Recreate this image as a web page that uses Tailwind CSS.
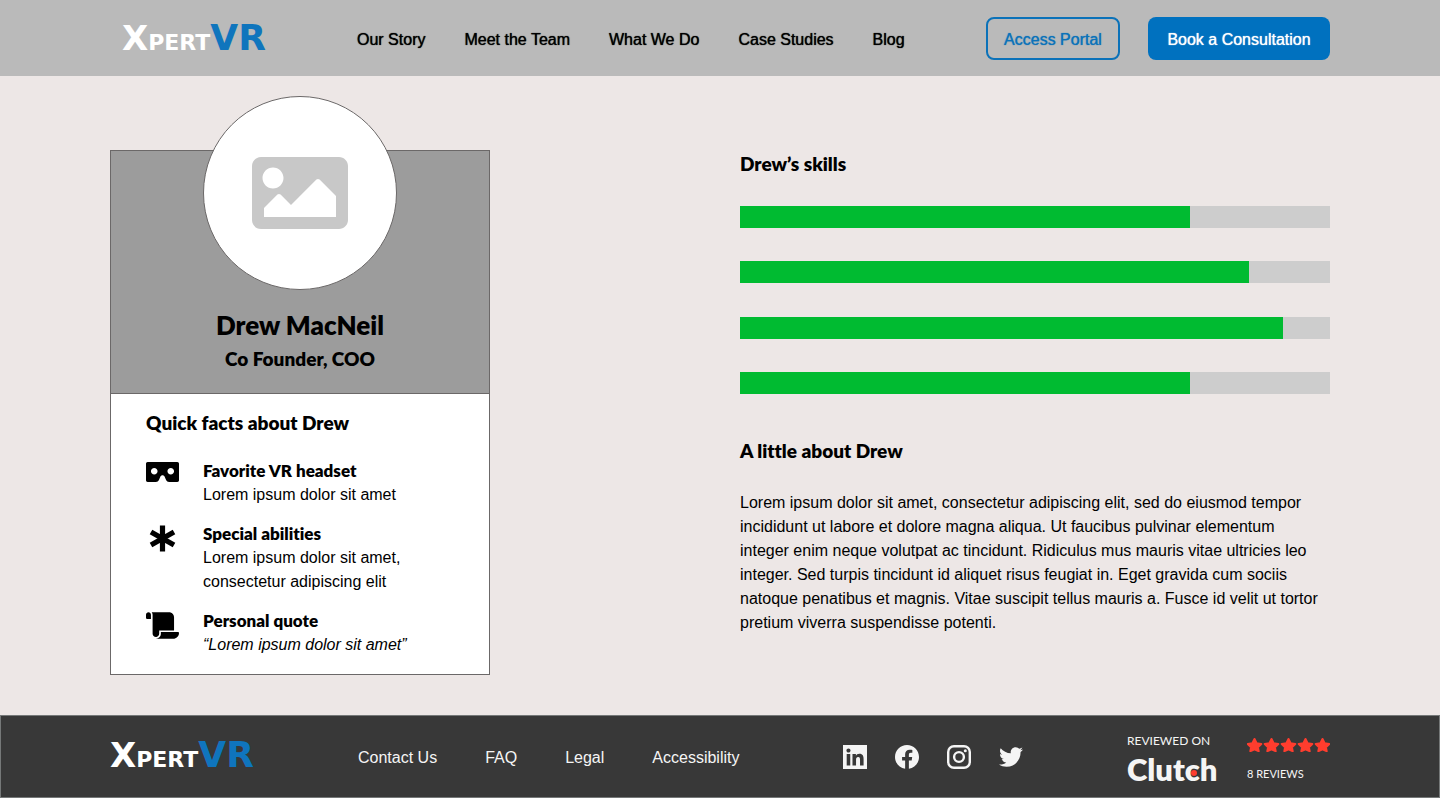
<!DOCTYPE html>
<html lang="en">
<head>
<meta charset="utf-8">
<meta name="viewport" content="width=device-width, initial-scale=1">
<title>Drew MacNeil – XpertVR</title>
<script src="https://cdn.jsdelivr.net/npm/@tailwindcss/browser@4"></script>
</head>
<body class="flex min-h-screen flex-col bg-[#ede7e6] font-['Liberation_Sans',Arial,sans-serif] text-base text-black [font-variant-ligatures:none]">

<header class="flex h-[76px] shrink-0 items-center bg-[#bababa] px-[110px]">
  <a href="#" aria-label="XpertVR home" class="flex w-[247px] shrink-0 items-baseline pt-1 pl-3 font-['DejaVu_Sans',sans-serif] leading-8 font-bold text-white"><span class="text-[34px]">X</span><span class="text-[22px]">PERT</span><span class="text-[36px] text-[#0f75bd]">VR</span></a>
  <nav aria-label="Main" class="flex gap-[39px] pt-1 whitespace-nowrap [text-shadow:0_0_1px_currentColor]">
    <a href="#">Our Story</a>
    <a href="#">Meet the Team</a>
    <a href="#">What We Do</a>
    <a href="#">Case Studies</a>
    <a href="#">Blog</a>
  </nav>
  <div class="ml-auto flex gap-7 whitespace-nowrap">
    <button type="button" class="h-[43px] w-[134px] rounded-lg border-2 border-[#0b72b9] pt-[3px] text-[#0b72b9] [text-shadow:0_0_1px_currentColor]">Access Portal</button>
    <button type="button" class="h-[43px] w-[182px] rounded-lg bg-[#0071bf] pt-[3px] text-white [text-shadow:0_0_1px_currentColor]">Book a Consultation</button>
  </div>
</header>

<main class="flex grow items-start justify-between gap-10 px-[110px] pt-[74px] pb-10">
  <article class="w-[380px] shrink-0 border border-[#6b6868] bg-white">
    <header class="flex h-[243px] flex-col items-center border-b border-[#6b6868] bg-[#9c9c9c] font-[Lato,sans-serif]">
      <div class="-mt-[55px] flex size-[194px] shrink-0 items-center justify-center rounded-full border border-[#6b6868] bg-white">
        <svg class="h-[72px] w-24 fill-[#c8c8c8]" viewBox="0 64 512 384" role="img" aria-label="Portrait placeholder"><path d="M464 448H48c-26.51 0-48-21.49-48-48V112c0-26.51 21.49-48 48-48h416c26.51 0 48 21.49 48 48v288c0 26.51-21.49 48-48 48zM112 120c-30.928 0-56 25.072-56 56s25.072 56 56 56 56-25.072 56-56-25.072-56-56-56zM64 384h384V272l-87.515-87.515c-4.686-4.686-12.284-4.686-16.971 0L208 320l-55.515-55.515c-4.686-4.686-12.284-4.686-16.971 0L64 336v48z"/></svg>
      </div>
      <h1 class="mt-[19px] text-[26px] leading-8 font-extrabold">Drew MacNeil</h1>
      <p class="mt-1 text-[19px] leading-7 font-extrabold">Co Founder, COO</p>
    </header>
    <div class="px-[35px] pt-[15px] pb-[17px]">
      <h2 class="font-[Lato,sans-serif] text-[19px] leading-7 font-extrabold">Quick facts about Drew</h2>
      <ul class="mt-[22px] flex flex-col gap-[15px]">
        <li class="flex">
          <svg class="mt-[3px] mr-6 h-5 w-[33px] shrink-0" viewBox="0 64 640 384" aria-hidden="true"><path d="M608 64H32C14.33 64 0 78.33 0 96v320c0 17.67 14.33 32 32 32h160.22c25.19 0 48.03-14.77 58.36-37.74l27.74-61.64C286.21 331.08 302.35 320 320 320s33.79 11.08 41.68 28.62l27.74 61.64C399.75 433.23 422.6 448 447.78 448H608c17.67 0 32-14.33 32-32V96c0-17.67-14.33-32-32-32zM160 304c-35.35 0-64-28.65-64-64s28.65-64 64-64 64 28.65 64 64-28.65 64-64 64zm320 0c-35.35 0-64-28.65-64-64s28.65-64 64-64 64 28.65 64 64-28.65 64-64 64z"/></svg>
          <div class="leading-6"><h3 class="font-[Lato,sans-serif] text-[17px] leading-6 font-extrabold">Favorite VR headset</h3><p>Lorem ipsum dolor sit amet</p></div>
        </li>
        <li class="flex">
          <svg class="mt-[3px] mr-6 h-[27px] w-[33px] shrink-0 stroke-black" viewBox="0 0 33 27" stroke-width="5.2" aria-hidden="true"><path d="M16.5 .5v26M5 7l23 13M5 20L28 7"/></svg>
          <div class="leading-6"><h3 class="font-[Lato,sans-serif] text-[17px] leading-6 font-extrabold">Special abilities</h3><p>Lorem ipsum dolor sit amet,<br>consectetur adipiscing elit</p></div>
        </li>
        <li class="flex">
          <svg class="mt-[3px] mr-6 h-[27px] w-[33px] shrink-0" viewBox="0 0 640 512" aria-hidden="true"><path d="M48 0C21.53 0 0 21.53 0 48v64c0 8.84 7.16 16 16 16h80V48C96 21.53 74.47 0 48 0zm208 412.57V352h288V96c0-52.94-43.06-96-96-96H111.59C121.74 13.41 128 29.92 128 48v368c0 38.87 34.65 69.65 74.75 63.12C234.22 474 256 444.46 256 412.57zM288 384v32c0 52.93-43.06 96-96 96h336c61.86 0 112-50.14 112-112 0-8.84-7.16-16-16-16H288z"/></svg>
          <div class="leading-6"><h3 class="font-[Lato,sans-serif] text-[17px] leading-6 font-extrabold">Personal quote</h3><p class="italic">“Lorem ipsum dolor sit amet”</p></div>
        </li>
      </ul>
    </div>
  </article>

  <div class="max-w-[590px] grow">
    <section>
      <h2 class="font-[Lato,sans-serif] text-[19px] leading-7 font-extrabold">Drew’s skills</h2>
      <div class="mt-7 flex h-[188px] flex-col justify-between">
        <div role="progressbar" aria-label="Skill 1" aria-valuenow="76" class="h-[22px] bg-[#cdcdcd]"><div class="h-full bg-[#00bb31]" style="width:76.3%"></div></div>
        <div role="progressbar" aria-label="Skill 2" aria-valuenow="86" class="h-[22px] bg-[#cdcdcd]"><div class="h-full bg-[#00bb31]" style="width:86.3%"></div></div>
        <div role="progressbar" aria-label="Skill 3" aria-valuenow="92" class="h-[22px] bg-[#cdcdcd]"><div class="h-full bg-[#00bb31]" style="width:92%"></div></div>
        <div role="progressbar" aria-label="Skill 4" aria-valuenow="76" class="h-[22px] bg-[#cdcdcd]"><div class="h-full bg-[#00bb31]" style="width:76.3%"></div></div>
      </div>
    </section>
    <section class="mt-[43px]">
      <h2 class="font-[Lato,sans-serif] text-[19px] leading-7 font-extrabold">A little about Drew</h2>
      <p class="mt-[26px] leading-6">Lorem ipsum dolor sit amet, consectetur adipiscing elit, sed do eiusmod tempor<br>incididunt ut labore et dolore magna aliqua. Ut faucibus pulvinar elementum<br>integer enim neque volutpat ac tincidunt. Ridiculus mus mauris vitae ultricies leo<br>integer. Sed turpis tincidunt id aliquet risus feugiat in. Eget gravida cum sociis<br>natoque penatibus et magnis. Vitae suscipit tellus mauris a. Fusce id velit ut tortor<br>pretium viverra suspendisse potenti.</p>
    </section>
  </div>
</main>

<footer class="flex h-[83px] shrink-0 items-center justify-between border border-[#757878] bg-[#383838] px-[109px] text-[#f5f5f5]">
  <div class="flex items-center pt-0.5">
    <a href="#" aria-label="XpertVR home" class="flex w-[248px] shrink-0 items-baseline font-['DejaVu_Sans',sans-serif] leading-8 font-bold text-white"><span class="text-[34px]">X</span><span class="text-[22px]">PERT</span><span class="text-[36px] text-[#0f75bd]">VR</span></a>
    <nav aria-label="Footer" class="flex gap-12 whitespace-nowrap">
      <a href="#">Contact Us</a>
      <a href="#">FAQ</a>
      <a href="#">Legal</a>
      <a href="#">Accessibility</a>
    </nav>
  </div>
  <div class="flex items-center gap-7">
    <a href="#" aria-label="LinkedIn"><svg class="size-6 fill-[#f5f5f5]" viewBox="0 32 448 448"><path d="M448 32H0v448h448V32zM135.4 416H69V202.2h66.5V416zm-33.2-243c-21.3 0-38.5-17.3-38.5-38.5S80.9 96 102.2 96c21.2 0 38.5 17.3 38.5 38.5 0 21.3-17.2 38.5-38.5 38.5zm282.1 243h-66.4V312c0-24.8-.5-56.7-34.5-56.7-34.6 0-39.9 27-39.9 54.9V416h-66.4V202.2h63.7v29.2h.9c8.9-16.8 30.6-34.5 62.9-34.5 67.2 0 79.7 44.3 79.7 101.9V416z" fill-rule="evenodd"/></svg></a>
    <a href="#" aria-label="Facebook"><svg class="size-6 fill-[#f5f5f5]" viewBox="8 8 496 496"><path d="M504 256C504 119 393 8 256 8S8 119 8 256c0 123.78 90.69 226.38 209.25 245V327.69h-63V256h63v-54.64c0-62.15 37-96.48 93.67-96.48 27.14 0 55.52 4.84 55.52 4.84v61h-31.28c-30.8 0-40.41 19.12-40.41 38.73V256h68.78l-11 71.69h-57.78V501C413.31 482.38 504 379.78 504 256z"/></svg></a>
    <a href="#" aria-label="Instagram"><svg class="size-6 fill-none stroke-[#f5f5f5]" viewBox="0 0 24 24" stroke-width="2.4"><rect x="1.2" y="1.2" width="21.6" height="21.6" rx="5.8"/><circle cx="12" cy="12" r="4.9"/><circle cx="18.3" cy="5.7" r="1.5" class="fill-[#f5f5f5] stroke-none"/></svg></a>
    <a href="#" aria-label="Twitter"><svg class="size-6 fill-[#f5f5f5]" viewBox="0 0 512 512"><path d="M459.37 151.716c.325 4.548.325 9.097.325 13.645 0 138.72-105.583 298.558-298.558 298.558-59.452 0-114.68-17.219-161.137-47.106 8.447.974 16.568 1.299 25.34 1.299 49.055 0 94.213-16.568 130.274-44.832-46.132-.975-84.792-31.188-98.112-72.772 6.498.974 12.995 1.624 19.818 1.624 9.421 0 18.843-1.3 27.614-3.573-48.081-9.747-84.143-51.98-84.143-102.985v-1.299c13.969 7.797 30.214 12.67 47.431 13.319-28.264-18.843-46.781-51.005-46.781-87.391 0-19.492 5.197-37.36 14.294-52.954 51.655 63.675 129.3 105.258 216.365 109.807-1.624-7.797-2.599-15.918-2.599-24.04 0-57.828 46.782-104.934 104.934-104.934 30.213 0 57.502 12.67 76.67 33.137 23.715-4.548 46.456-13.32 66.599-25.34-7.798 24.366-24.366 44.833-46.132 57.827 21.117-2.273 41.584-8.122 60.426-16.243-14.292 20.791-32.161 39.308-52.628 54.253z"/></svg></a>
  </div>
  <a href="#" class="flex w-[203px] justify-between pt-2 font-[Lato,sans-serif] whitespace-nowrap">
    <span class="flex flex-col">
      <span class="text-xs leading-4">REVIEWED ON</span>
      <span class="relative text-[31px] leading-10 font-extrabold">Clutch<span class="absolute top-[21px] left-[64px] size-[6px] rounded-full bg-[#ff3d2e]"></span></span>
    </span>
    <span class="flex w-[83px] flex-col gap-[14px] pt-1">
      <svg class="h-[15px] w-[83px] fill-[#ff3d2e] stroke-[#ff3d2e]" viewBox="0 0 83 15" stroke-width="2" stroke-linejoin="round" role="img" aria-label="5 stars">
        <defs><path id="star" d="M7.500 2l2.100 4.300 4.700.7-3.400 3.300.8 3.900-4.200-1.800-4.200 1.800.8-3.900L.700 7l4.700-.7z"/></defs>
        <use href="#star"/><use href="#star" x="17"/><use href="#star" x="34"/><use href="#star" x="51"/><use href="#star" x="68"/>
      </svg>
      <span class="text-[11px] leading-4">8 REVIEWS</span>
    </span>
  </a>
</footer>
</body>
</html>
